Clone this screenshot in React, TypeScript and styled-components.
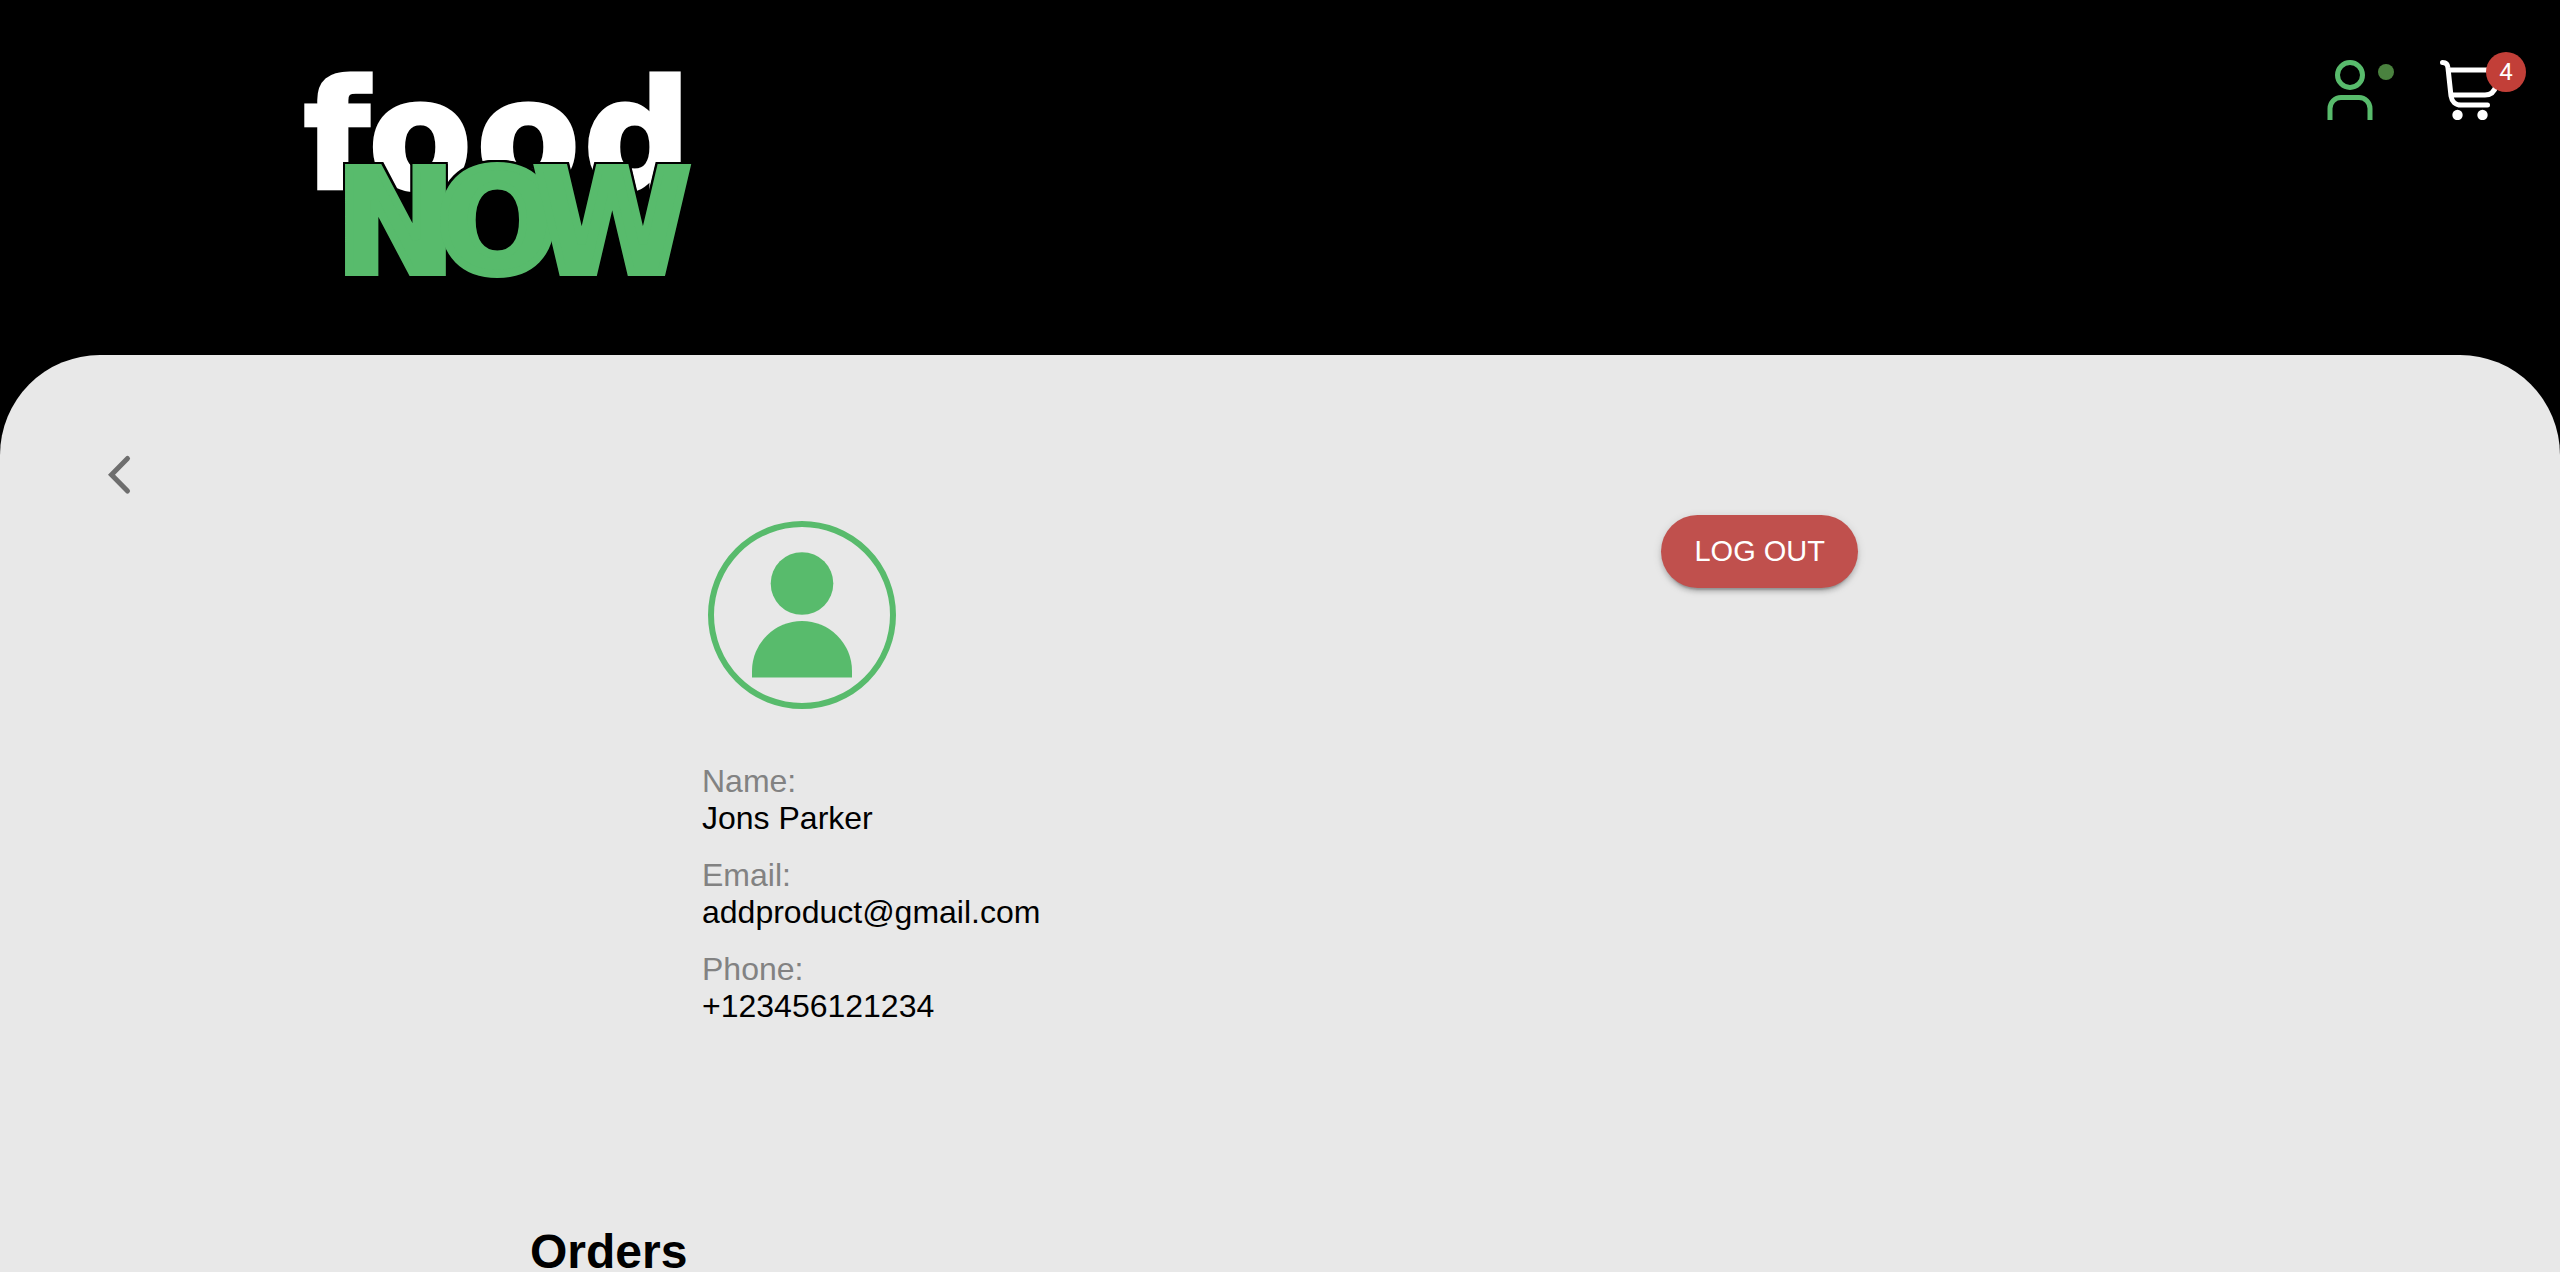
import React from "react";
import styled, { createGlobalStyle } from "styled-components";

const GREEN = "#58bb6c";
const SANS = '"Liberation Sans", Arial, Helvetica, sans-serif';

const GlobalStyle = createGlobalStyle`
  *, *::before, *::after { box-sizing: border-box; }
  body { margin: 0; background: #000; font-family: ${SANS}; color: #000; }
`;

const Page = styled.div`
  display: flex;
  flex-direction: column;
  height: 100vh;
  overflow-y: auto;
  scrollbar-width: none;
  background: #000;
`;

const Header = styled.header`
  display: flex;
  flex: none;
  justify-content: space-between;
  align-items: flex-start;
  padding: 50px 60px 55px 290px;
`;

const LogoLink = styled.a`
  display: block;
  line-height: 0;
`;

const LogoArt = styled.svg`
  display: block;
  overflow: visible;
`;

const LogoText = styled.text<{ $size: number; $color: string; $outlined?: boolean }>`
  font-family: "DejaVu Sans", sans-serif;
  font-weight: 700;
  font-size: ${(p) => p.$size}px;
  line-height: 1;
  fill: ${(p) => p.$color};
  stroke: ${(p) => p.$color};
  stroke-width: ${(p) => (p.$outlined ? 8 : 5)}px;
  stroke-linejoin: miter;
  filter: ${(p) =>
    p.$outlined
      ? "drop-shadow(2px 0 #000) drop-shadow(-2px 0 #000) drop-shadow(0 -2px #000)"
      : "none"};
`;

const Actions = styled.nav`
  display: flex;
  gap: 60px;
  padding-top: 10px;
`;

const IconButton = styled.button`
  position: relative;
  display: flex;
  align-items: center;
  justify-content: center;
  width: 60px;
  height: 60px;
  padding: 0;
  border: 0;
  background: none;
  cursor: pointer;
`;

const OnlineDot = styled.span`
  position: absolute;
  top: 4px;
  right: -14px;
  width: 16px;
  height: 16px;
  border-radius: 50%;
  background: #4a823f;
`;

const CountBadge = styled.span`
  position: absolute;
  top: -8px;
  right: -26px;
  width: 40px;
  height: 40px;
  border-radius: 50%;
  background: #c23f38;
  color: #fff;
  font: 400 24px/40px Roboto, sans-serif;
  text-align: center;
`;

const Main = styled.main`
  flex: 1 0 auto;
  padding-top: 90px;
  border-radius: 100px 100px 0 0;
  background: #e8e8e8;
`;

const BackRow = styled.div`
  padding: 0 90px 10px;
`;

const Profile = styled.section`
  display: flex;
  justify-content: space-between;
  align-items: flex-start;
  width: 100%;
  max-width: 1156px;
  margin: 0 auto;
`;

const Details = styled.dl`
  display: flex;
  flex-direction: column;
  gap: 20px;
  margin: 48px 0 0;
  font-size: 32px;
  line-height: 37px;
`;

const Label = styled.dt`
  color: #828282;
`;

const Value = styled.dd`
  margin: 0;
`;

const AvatarIcon = styled.svg`
  display: block;
`;

const LogoutButton = styled.button`
  padding: 0 33px;
  border: 0;
  border-radius: 37px;
  background: #c0504d;
  color: #fff;
  font-family: ${SANS};
  font-size: 29px;
  line-height: 73px;
  cursor: pointer;
  box-shadow: 0 6px 2px -4px rgba(0, 0, 0, 0.2), 0 4px 4px rgba(0, 0, 0, 0.14),
    0 2px 10px rgba(0, 0, 0, 0.12);
`;

const Orders = styled.section`
  width: 100%;
  max-width: 1500px;
  margin: 203px auto 0;
`;

const OrdersTitle = styled.h2`
  margin: 0;
  font-size: 48px;
  line-height: 48px;
`;

const details = [
  { label: "Name:", value: "Jons Parker" },
  { label: "Email:", value: "addproduct@gmail.com" },
  { label: "Phone:", value: "+123456121234" },
];

function Logo() {
  return (
    <LogoArt width="420" height="250" viewBox="0 0 420 250" role="img" aria-label="food NOW">
      <LogoText $size={149} $color="#fff" x="14 79 187 294" y="138">
        food
      </LogoText>
      <LogoText $size={142} $color={GREEN} $outlined x="46 147 244" y="222">
        NOW
      </LogoText>
    </LogoArt>
  );
}

function UserIcon() {
  return (
    <svg width="60" height="60" viewBox="0 0 60 60" fill="none" stroke={GREEN} strokeWidth="5">
      <circle cx="30" cy="15" r="12.5" />
      <path d="M10 60V48.5a11 11 0 0 1 11-11h18a11 11 0 0 1 11 11V60" />
    </svg>
  );
}

function CartIcon() {
  return (
    <svg
      width="60"
      height="60"
      viewBox="0 0 60 60"
      fill="none"
      stroke="#fff"
      strokeWidth="5"
      strokeLinecap="round"
      strokeLinejoin="round"
    >
      <path d="M2.5 2.5C6 2.5 7.8 4.5 8 8L11 36C11.8 41.5 15.5 45 21 45H47.5" />
      <path d="M9 10H58L56 26C54.5 31.5 51 35 45 35H12" />
      <circle cx="17.5" cy="55" r="5.2" fill="#fff" stroke="none" />
      <circle cx="42.5" cy="55" r="5.2" fill="#fff" stroke="none" />
    </svg>
  );
}

function BackIcon() {
  return (
    <svg
      width="60"
      height="60"
      viewBox="0 0 60 60"
      fill="none"
      stroke="#6e6e6e"
      strokeWidth="5"
      strokeLinecap="round"
    >
      <path d="M37.5 13.5L21.5 29.7L37.5 46" strokeLinejoin="miter" />
    </svg>
  );
}

export default function App() {
  return (
    <>
      <GlobalStyle />
      <Page>
        <Header>
          <LogoLink href="#home">
            <Logo />
          </LogoLink>
          <Actions aria-label="Account">
            <IconButton type="button" aria-label="Profile">
              <UserIcon />
              <OnlineDot />
            </IconButton>
            <IconButton type="button" aria-label="Cart">
              <CartIcon />
              <CountBadge>4</CountBadge>
            </IconButton>
          </Actions>
        </Header>
        <Main>
          <BackRow>
            <IconButton type="button" aria-label="Back">
              <BackIcon />
            </IconButton>
          </BackRow>
          <Profile>
            <div>
              <AvatarIcon width="200" height="200" viewBox="0 0 200 200" fill={GREEN} aria-hidden="true">
                <circle cx="100" cy="100" r="91" fill="none" stroke={GREEN} strokeWidth="6" />
                <circle cx="100" cy="68.5" r="31.3" />
                <path d="M50 162.5V156a50 50 0 0 1 100 0V162.5Z" />
              </AvatarIcon>
              <Details>
                {details.map((d) => (
                  <div key={d.label}>
                    <Label>{d.label}</Label>
                    <Value>{d.value}</Value>
                  </div>
                ))}
              </Details>
            </div>
            <LogoutButton type="button">LOG OUT</LogoutButton>
          </Profile>
          <Orders>
            <OrdersTitle>Orders</OrdersTitle>
          </Orders>
        </Main>
      </Page>
    </>
  );
}
